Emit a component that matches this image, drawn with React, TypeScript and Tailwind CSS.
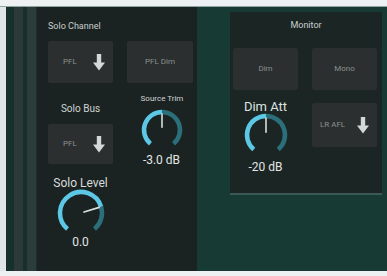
import React from "react";

function pt(cx: number, cy: number, r: number, a: number) {
  const rad = (a * Math.PI) / 180;
  return [cx + r * Math.sin(rad), cy - r * Math.cos(rad)];
}
function arc(cx: number, cy: number, r: number, a0: number, a1: number) {
  const [x0, y0] = pt(cx, cy, r, a0);
  const [x1, y1] = pt(cx, cy, r, a1);
  const large = a1 - a0 > 180 ? 1 : 0;
  return `M ${x0} ${y0} A ${r} ${r} 0 ${large} 1 ${x1} ${y1}`;
}

function Knob({ size, value }: { size: number; value: number }) {
  const c = size / 2;
  const r = size / 2 - 4;
  const start = -140;
  const end = 140;
  const v = start + (end - start) * value;
  const [ix, iy] = pt(c, c, r - 2, v);
  const [jx, jy] = pt(c, c, r * 0.15, v);
  return (
    <svg width={size} height={size} viewBox={`0 0 ${size} ${size}`}>
      <path d={arc(c, c, r, v, end)} stroke="#2b6f7b" strokeWidth={4.5} fill="none" />
      <path d={arc(c, c, r, start, v)} stroke="#5cc8e6" strokeWidth={4.5} fill="none" />
      <line x1={jx} y1={jy} x2={ix} y2={iy} stroke="#d9dede" strokeWidth={1.6} strokeLinecap="round" />
    </svg>
  );
}

function Arrow() {
  return (
    <svg width="12" height="17" viewBox="0 0 12 17">
      <rect x="3.8" y="0" width="4.4" height="9" fill="#d4d8d8" />
      <polygon points="0,8.5 12,8.5 6,16.5" fill="#d4d8d8" />
    </svg>
  );
}

function Btn({ label, arrow, className }: { label: string; arrow?: boolean; className?: string }) {
  return (
    <div
      className={
        "flex items-center rounded-[2px] bg-[#2b2f2f] text-[8px] text-[#8a9090] " +
        (arrow ? "justify-between pl-[15px] pr-[8px] " : "justify-center ") +
        (className ?? "")
      }
    >
      <span>{label}</span>
      {arrow && <Arrow />}
    </div>
  );
}

export default function App() {
  return (
    <div
      className="w-[387px] h-[276px] bg-[#eef1f1] pt-[6px] pb-[5px]"
      style={{ fontFamily: "Roboto, 'Liberation Sans', sans-serif" }}
    >
      <div className="h-full flex bg-[#173a34] border-t border-[#8fa5a0]">
        <div className="w-[6px] bg-[#dfe6e5]" />
        <div className="w-[31px] flex bg-[#17302c]">
          <div className="w-[8px]" />
          <div className="w-[9px] bg-[#2b3a38]" />
          <div className="w-[4px]" />
          <div className="w-[9px] bg-[#2c3c3a]" />
        </div>
        <div className="w-[160px] bg-[#1b2322] flex pl-[11px] pr-[4px]">
          <div className="flex flex-col">
            <div className="text-[9px] text-[#c9cfce] pt-[15px] leading-none whitespace-nowrap">Solo Channel</div>
            <Btn label="PFL" arrow className="w-[65px] h-[42px] mt-[10px]" />
            <div className="text-[10px] text-[#cfd4d3] text-center mt-[21px] leading-none">Solo Bus</div>
            <Btn label="PFL" arrow className="w-[65px] h-[40px] mt-[10px]" />
            <div className="flex flex-col items-center mt-[13px]">
              <div className="text-[12px] text-[#d8dcdb] leading-none">Solo Level</div>
              <div className="mt-[-1px]">
                <Knob size={50} value={0.76} />
              </div>
              <div className="text-[12px] text-[#e2e6e5] leading-none mt-[-2px]">0.0</div>
            </div>
          </div>
          <div className="flex flex-col ml-[14px]">
            <Btn label="PFL Dim" className="w-[66px] h-[42px] mt-[34px]" />
            <div className="flex flex-col items-center">
              <div className="text-[8px] text-[#cfd4d3] leading-none pl-[4px] mt-[12px] whitespace-nowrap">Source Trim</div>
              <div className="mt-[5px] ml-[3px]">
                <Knob size={44} value={0.5} />
              </div>
              <div className="text-[12px] text-[#e2e6e5] leading-none mt-[2px] ml-[3px]">-3.0 dB</div>
            </div>
          </div>
        </div>
        <div className="w-[33px]" />
        <div className="flex flex-col">
          <div className="h-[5px]" />
          <div className="w-[152px] h-[183px] bg-[#1b2524] border-b-2 border-[#3c5a55] flex flex-col px-[3px]">
            <div className="text-[9px] text-[#c9cfce] text-center pt-[9px] leading-none">Monitor</div>
            <div className="flex gap-[14px] mt-[18px]">
              <Btn label="Dim" className="w-[65px] h-[42px]" />
              <Btn label="Mono" className="w-[65px] h-[42px]" />
            </div>
            <div className="flex gap-[14px] mt-[10px]">
              <div className="w-[65px] flex flex-col items-center">
                <div className="text-[13px] text-[#dde1e0] leading-none">Dim Att</div>
                <div className="mt-[-1px]">
                  <Knob size={46} value={0.5} />
                </div>
                <div className="text-[12px] text-[#e2e6e5] leading-none mt-[3px]">-20 dB</div>
              </div>
              <Btn label="LR AFL" arrow className="w-[65px] h-[44px] mt-[3px] !pl-[8px]" />
            </div>
          </div>
        </div>
      </div>
    </div>
  );
}
